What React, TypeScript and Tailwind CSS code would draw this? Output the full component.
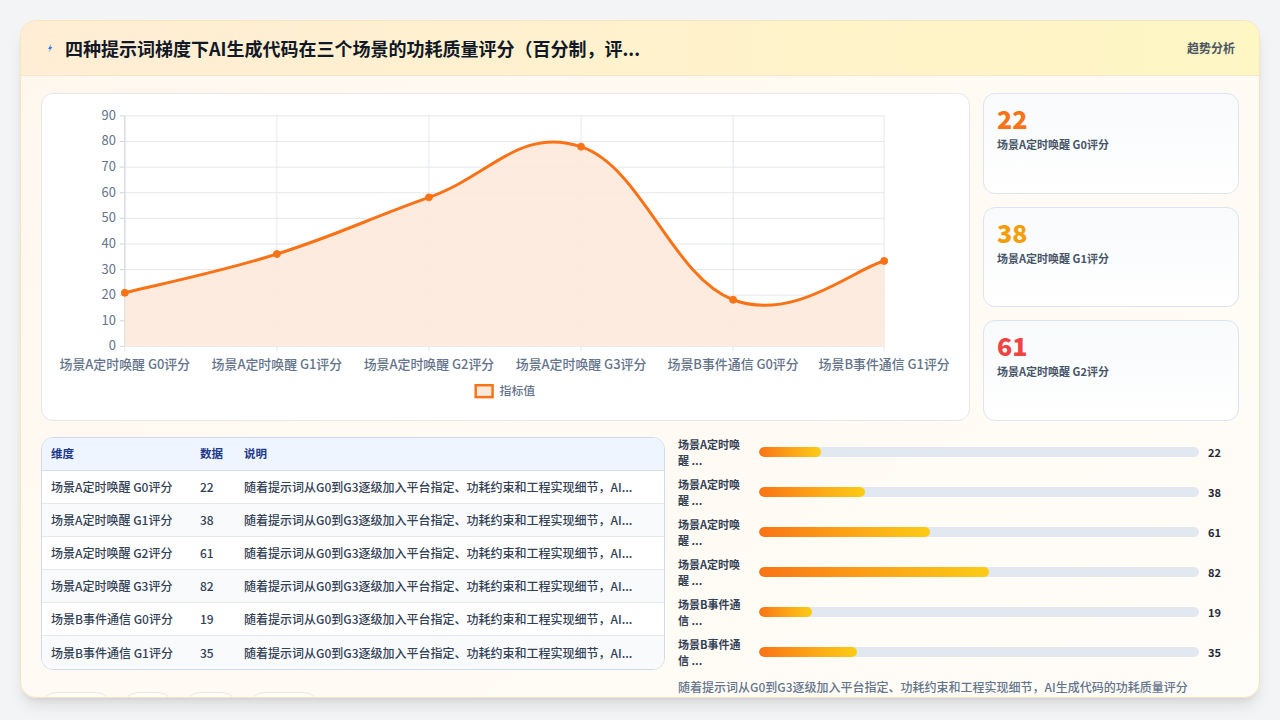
import React from "react";

const pts: [number, number][] = [[81,200],[234,161],[387,104],[540,53],[693,207],[845,168]];
function curve(p: [number, number][]) {
  let d = `M${p[0][0]},${p[0][1]}`;
  for (let i = 0; i < p.length - 1; i++) {
    const p0 = p[i - 1] || p[i], p1 = p[i], p2 = p[i + 1], p3 = p[i + 2] || p2;
    const t = 0.2;
    const c1x = p1[0] + (p2[0] - p0[0]) * t, c1y = p1[1] + (p2[1] - p0[1]) * t;
    const c2x = p2[0] - (p3[0] - p1[0]) * t, c2y = p2[1] - (p3[1] - p1[1]) * t;
    d += ` C${c1x},${c1y} ${c2x},${c2y} ${p2[0]},${p2[1]}`;
  }
  return d;
}
const labels = ["场景A定时唤醒 G0评分","场景A定时唤醒 G1评分","场景A定时唤醒 G2评分","场景A定时唤醒 G3评分","场景B事件通信 G0评分","场景B事件通信 G1评分"];
const vals = [22,38,61,82,19,35];
const short = ["场景A定时唤醒 ...","场景A定时唤醒 ...","场景A定时唤醒 ...","场景A定时唤醒 ...","场景B事件通信 ...","场景B事件通信 ..."];
const desc = "随着提示词从G0到G3逐级加入平台指定、功耗约束和工程实现细节，AI...";
const font = { fontFamily: '"Noto Sans CJK SC", "Noto Sans", sans-serif' };

function Chart() {
  const top = 22, bot = 254, left = 81, right = 845;
  const line = curve(pts);
  const area = line + ` L${right},${bot} L${left},${bot} Z`;
  return (
    <svg viewBox="0 0 928 328" className="w-full h-full">
      {Array.from({ length: 10 }).map((_, i) => {
        const y = bot - (i * (bot - top)) / 9;
        return (
          <g key={i}>
            <line x1={left} x2={right} y1={y} y2={y} stroke="#e5e7eb" />
            <line x1={left - 5} x2={left} y1={y} y2={y} stroke="#d1d5db" />
            <text x={left - 9} y={y + 4} textAnchor="end" fontSize="13" fill="#64748b">{i * 10}</text>
          </g>
        );
      })}
      {pts.map((p, i) => (
        <g key={i}>
          <line x1={p[0]} x2={p[0]} y1={top} y2={bot + 5} stroke="#e5e7eb" />
          <text x={p[0]} y={bot + 23} textAnchor="middle" fontSize="13" fontWeight="500" fill="#64748b">{labels[i]}</text>
        </g>
      ))}
      <line x1={left} x2={left} y1={top} y2={bot} stroke="#d1d5db" />
      <path d={area} fill="#fde9dc" fillOpacity="0.9" />
      <path d={line} fill="none" stroke="#f97316" strokeWidth="3" />
      {pts.map((p, i) => (
        <circle key={i} cx={p[0]} cy={p[1]} r="3.5" fill="#f97316" stroke="#f97316" />
      ))}
      <rect x="434" y="293" width="17" height="12" fill="#fde9dc" stroke="#f97316" strokeWidth="2.5" />
      <text x="458" y="303" fontSize="12" fontWeight="500" fill="#64748b">指标值</text>
    </svg>
  );
}

export default function App() {
  return (
    <div className="w-[1280px] h-[720px] bg-[#f3f4f6] p-5 overflow-hidden" style={font}>
      <div className="h-[678px] rounded-2xl border border-[#fbe3bd] overflow-hidden flex flex-col bg-gradient-to-br from-[#fff7ee] to-[#fffdf8] shadow-lg">
        <div className="h-[55px] shrink-0 flex items-center justify-between px-6 bg-gradient-to-r from-[#ffedd5] to-[#fef6c3] border-b border-[#f3e7d0]">
          <div className="flex items-center gap-2.5">
            <svg width="10" height="10" viewBox="0 0 10 10"><path d="M6 1 L3 6 L5 6 L3.5 9.5 L7.5 4 L5.5 4 Z" fill="#3b82f6" /></svg>
            <span className="text-[18px] font-bold text-[#111827]">四种提示词梯度下AI生成代码在三个场景的功耗质量评分（百分制，评...</span>
          </div>
          <span className="text-[12px] font-semibold text-[#4b5563]">趋势分析</span>
        </div>
        <div className="flex-1 px-5 pt-[17px] flex flex-col gap-4">
          <div className="flex gap-[13px] h-[328px] shrink-0">
            <div className="w-[929px] shrink-0 bg-white rounded-xl border border-[#e5e7eb]">
              <Chart />
            </div>
            <div className="flex-1 flex flex-col gap-[13px]">
              {[["22","text-[#f97316]","场景A定时唤醒 G0评分"],["38","text-[#f59e0b]","场景A定时唤醒 G1评分"],["61","text-[#ef4444]","场景A定时唤醒 G2评分"]].map(([n,c,l]) => (
                <div key={n} className="flex-1 rounded-xl border border-[#dbe4f0] bg-gradient-to-b from-[#f8fafc] to-white px-[13px] pt-[8px]">
                  <div className={`text-[25px] font-extrabold leading-[32px] ${c}`}>{n}</div>
                  <div className="text-[11px] font-semibold text-[#475569] mt-0.5">{l}</div>
                </div>
              ))}
            </div>
          </div>
          <div className="flex gap-[13px] h-[239px] shrink-0">
            <div className="w-[624px] shrink-0 self-start rounded-xl border border-[#cfdbea] overflow-hidden bg-white">
              <div className="flex h-[33px] items-center bg-[#eef5ff] border-b border-[#d5e0ee] text-[11.5px] font-semibold text-[#1e3a8a]">
                <div className="w-[158px] pl-[9px]">维度</div>
                <div className="w-[44px]">数据</div>
                <div>说明</div>
              </div>
              {vals.map((v, i) => (
                <div key={i} className={`flex h-[33px] items-center text-[12px] font-medium text-[#334155] ${i < 5 ? "border-b border-[#e5eaf0]" : ""} ${i % 2 ? "bg-[#f8fafc]" : "bg-white"}`}>
                  <div className="w-[158px] pl-[9px]">{labels[i]}</div>
                  <div className="w-[44px]">{v}</div>
                  <div>{desc}</div>
                </div>
              ))}
            </div>
            <div className="flex-1 flex flex-col -mt-[5px]">
              {vals.map((v, i) => (
                <div key={i} className="flex items-center h-[40px] shrink-0">
                  <div className="w-[81px] shrink-0 text-[11px] font-bold text-[#334155] leading-[16px] pr-2">{short[i]}</div>
                  <div className="w-[440px] h-[10px] rounded-full bg-[#e2e8f0] overflow-hidden">
                    <div className="h-full rounded-full bg-gradient-to-r from-[#f97316] to-[#facc15]" style={{ width: `${(v / 157) * 100}%` }} />
                  </div>
                  <div className="ml-[9px] text-[11px] font-bold text-[#1f2937]">{v}</div>
                </div>
              ))}
              <div className="mt-[6px] text-[12px] font-medium text-[#64748b] whitespace-nowrap">随着提示词从G0到G3逐级加入平台指定、功耗约束和工程实现细节，AI生成代码的功耗质量评分</div>
            </div>
          </div>
          <div className="flex gap-3 shrink-0">
            {[70,50,52,70].map((w, i) => (
              <div key={i} style={{ width: w }} className="h-[30px] shrink-0 rounded-full border border-[#eee6da] bg-white/60" />
            ))}
          </div>
        </div>
      </div>
    </div>
  );
}
